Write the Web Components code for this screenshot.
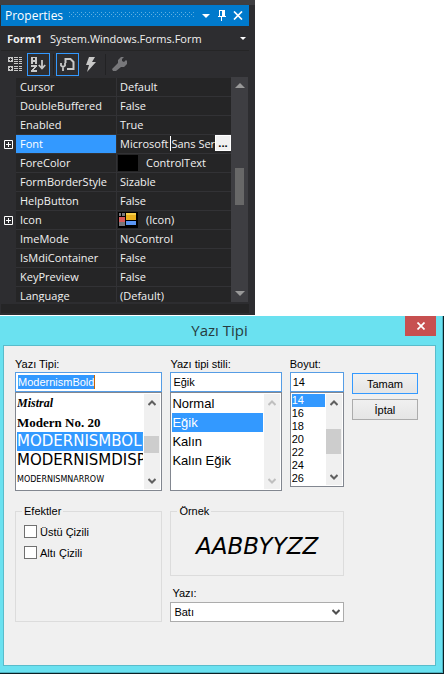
<!DOCTYPE html>
<html lang="tr">
<head>
<meta charset="utf-8">
<title>Yazı Tipi</title>
<style>
body { margin: 0; background: #fff; }
</style>
</head>
<body>
<properties-panel></properties-panel>
<font-dialog></font-dialog>
<script>
class Base extends HTMLElement {
  connectedCallback() {
    if (this.shadowRoot) return;
    this.attachShadow({ mode: 'open' }).innerHTML =
      '<style>:host,*{box-sizing:border-box}button{font:inherit;padding:0;border:0;background:none;color:inherit;display:grid;place-items:center}svg{display:block}</style>' + this.render();
  }
}

/* Vertical scroll bar: thumb position and size in percent of the track. */
customElements.define('scroll-bar', class extends Base {
  render() {
    const dark = this.hasAttribute('dark');
    const top = this.getAttribute('before') || 0;
    const size = this.getAttribute('size') || 0;
    const rest = 100 - top - size;
    const off = this.hasAttribute('disabled');
    const c = dark ? '#999' : off ? '#bfbfbf' : '#606060';
    const up = dark ? `<svg width="10" height="5"><path d="M0 5 5 0l5 5z" fill="${c}"/></svg>`
      : `<svg width="8" height="6"><path d="M.5 5 4 1.5 7.500 5" fill="none" stroke="${c}" stroke-width="2"/></svg>`;
    const down = dark ? `<svg width="10" height="5"><path d="M0 0h10L5 5z" fill="${c}"/></svg>`
      : `<svg width="8" height="6"><path d="M.5 1 4 4.500 7.500 1" fill="none" stroke="${c}" stroke-width="2"/></svg>`;
    return `<style>
      :host{display:flex;flex-direction:column;background:${dark ? '#3e3e42' : '#f0f0f0'};width:${dark ? 17 : 16}px;flex:none}
      button{height:17px;width:100%;flex:none}
      .track{flex:1;display:flex;flex-direction:column;min-height:0}
      .thumb{flex:${size} 0 0;background:${dark ? '#686868' : '#cdcdcd'};margin:0 ${dark ? '4px' : '1px 0 0'}}
      .a{flex:${top} 0 0}.b{flex:${rest} 0 0}
    </style>
    <button aria-label="Up">${up}</button>
    <div class="track"><div class="a"></div>${size ? '<div class="thumb"></div>' : ''}<div class="b"></div></div>
    <button aria-label="Down">${down}</button>`;
  }
});

customElements.define('panel-title', class extends Base {
  render() {
    return `<style>
      :host{display:flex;align-items:center;height:21px;background:#007acc;color:#fff;padding:0 3px 0 4px;font-size:12px}
      .grip{flex:1;height:7px;margin:0 4px 0 6px}
      button{width:16px;height:16px}
    </style><slot></slot>
    <svg class="grip"><defs><pattern id="d" width="4" height="4" patternUnits="userSpaceOnUse"><path d="M0 0h1v1H0zM2 2h1v1H2z" fill="#62b0e2"/></pattern></defs><rect width="100%" height="5" fill="url(#d)"/></svg>
    <button aria-label="Menu"><svg width="8" height="4"><path d="M0 0h8L4 4z" fill="#fff"/></svg></button>
    <button aria-label="Pin"><svg width="8" height="11" fill="#fff" shape-rendering="crispEdges"><path d="M1 0h6v6h1v1H4v4H3V7H0V6h1zM2 1v5h2V1z" fill-rule="evenodd"/></svg></button>
    <button aria-label="Close"><svg width="10" height="9"><path d="m1 .5 8 8m0-8-8 8" stroke="#fff" stroke-width="1.700"/></svg></button>`;
  }
});

customElements.define('panel-tools', class extends Base {
  render() {
    return `<style>
      :host{display:flex;align-items:center;height:27px;padding:0 3px;border-top:1px solid #252526}
      button{width:23px;height:23px}
      button[aria-pressed=true]{border:1px solid #3399ff}
      i{width:1px;height:21px;background:#222224;margin:0 2px 0 3px}
    </style>
    <button aria-label="Categorized"><svg width="15" height="15" fill="#c8c8c8" shape-rendering="crispEdges"><path fill-rule="evenodd" d="M0 0h5v5H0zM2 1v1H1v1h1v1h1V3h1V2H3V1zM0 9h5v5H0zm2 1v1H1v1h1v1h1v-1h1v-1H3v-1z"/><path d="M6 0h4v1H6zM6 2h4v1H6zM6 4h4v1H6zM6 6h4v1H6zM6 9h4v1H6zM6 11h4v1H6zM6 13h4v1H6zM11 0h3v1h-3zM11 2h3v1h-3zM11 4h3v1h-3zM11 6h3v1h-3zM11 9h3v1h-3zM11 11h3v1h-3zM11 13h3v1h-3z"/></svg></button>
    <button aria-label="Alphabetical" aria-pressed="true"><svg width="15" height="15" shape-rendering="crispEdges"><path d="M0 0h6v7H4V5H2v2H0zM2 1v2h2V1z" fill="#c8c8c8" fill-rule="evenodd"/><path d="M0 8h6v2H5v1H4v1H3v1h3v2H0v-2h1v-1h1v-1h1v-1H0z" fill="#c8c8c8"/><path d="M11 3v8M7.800 8l3.200 3.500L14.200 8" fill="none" stroke="#c8c8c8" stroke-width="1.800" shape-rendering="auto"/></svg></button>
    <i></i>
    <button aria-label="Properties" aria-pressed="true"><svg width="15" height="15" fill="none" stroke="#c8c8c8"><path d="M5.500 6V2h5l3 3v7H7" stroke-width="2"/><path d="M1 6v2.500L3 10l2-1.500V6M3 10v4" stroke-width="1.800"/></svg></button>
    <button aria-label="Events"><svg width="12" height="15" fill="#c8c8c8"><path d="M4 0h6L7 5h4L2 15l2-7H1z"/></svg></button>
    <i></i>
    <button aria-label="Property pages"><svg width="15" height="15"><path d="M9 0h3l-2 2v2l2 1 2-2 1 1v3l-3 3H9l-5 4H1l-1-2 6-6V3z" fill="#77777a"/></svg></button>`;
  }
});

customElements.define('property-grid', class extends Base {
  render() {
    const rows = [['Cursor','Default'],['DoubleBuffered','False'],['Enabled','True'],['Font',null],['ForeColor','ControlText'],['FormBorderStyle','Sizable'],['HelpButton','False'],['Icon','(Icon)'],['ImeMode','NoControl'],['IsMdiContainer','False'],['KeyPreview','False'],['Language','(Default)']];
    const plus = '<button aria-label="Expand"><svg width="9" height="9" fill="none" stroke="#fff"><path d="M.5.5h8v8h-8zM2 4.500h5M4.500 2v5"/></svg></button>';
    const icon = '<svg width="20" height="16"><path d="M0 0h20v16H0z" fill="#000"/><path d="M1 1h6v3H1zM1 10h6v4H1z" fill="#77777c"/><path d="M1 5h6v5H1z" fill="#d65a5a"/><path d="M3 1h1v3H3z" fill="#000"/><path d="M8 1h10v7H8z" fill="#e8b020"/><path d="M8 1h10v2H8z" fill="#f6cf4a"/><path d="M8 9h10v4H8z" fill="#5b97f5"/></svg>';
    const value = ([n, v]) => n === 'Font'
      ? '<div class="edit"><input aria-label="Font" value="Microsoft Sans Serif"><span class="caret"></span><button class="more" aria-label="Edit font">...</button></div>'
      : n === 'ForeColor' ? `<div class="v"><b></b>${v}</div>` : n === 'Icon' ? `<div class="v">${icon}${v}</div>` : v;
    return `<style>
      :host{display:flex;height:225px;overflow:hidden;color:#f1f1f1;margin-right:1px}
      .rows{flex:1;min-width:0;overflow:hidden;padding-top:1px}
      table{border-collapse:separate;border-spacing:0;width:100%;table-layout:fixed}
      th,td{height:19px;padding:0;font-weight:400;text-align:left;line-height:18px;white-space:nowrap;border-bottom:1px solid #323235}
      th.x{border:0;width:15px;padding-left:3px}
      th.n{background:#252526;padding-left:4px;width:101px;border-right:1px solid #323235}
      td{background:#252526;padding-left:3px}
      .sel th.n{background:#3399ff;color:#fff}
      .v{display:flex;align-items:center;gap:8px;height:18px;margin-left:-2px}
      b{width:20px;height:16px;background:#000}
      .edit{display:flex;position:relative;height:18px}
      input{font:inherit;color:inherit;background:none;border:0;padding:0;flex:1;min-width:0;height:18px;outline:0}
      .caret{position:absolute;left:50px;top:1px;width:1px;height:15px;background:#fff}
      .more{width:16px;height:16px;background:#f0f0f0;color:#000;border:1px solid #fff;line-height:10px;font-weight:700}
    </style>
    <div class="rows"><table>${rows.map(r => `<tr${r[0] === 'Font' ? ' class="sel"' : ''}><th class="x">${r[0] === 'Font' || r[0] === 'Icon' ? plus : ''}</th><th class="n" scope="row">${r[0]}</th><td>${value(r)}</td></tr>`).join('')}</table></div>
    <scroll-bar dark before="39" size="19"></scroll-bar>`;
  }
});

customElements.define('properties-panel', class extends Base {
  render() {
    return `<style>
      :host{display:block;max-width:255px;background:#2d2d30;border-top:5px solid #3f3f42;padding:0 6px 2px 1px;margin-bottom:1px;font-family:"Open Sans","Noto Sans",sans-serif;font-size:11px}
      .obj{display:flex;align-items:center;height:24px;width:100%;color:#f1f1f1;padding:0 3px 0 6px;gap:8px}
      .obj svg{margin-left:auto}
      .desc{height:9px;margin-top:2px;background:#252526}
    </style>
    <panel-title>Properties</panel-title>
    <button class="obj"><strong>Form1</strong><span>System.Windows.Forms.Form</span><svg width="6" height="3"><path d="M0 0h6L3 3z" fill="#fff"/></svg></button>
    <panel-tools></panel-tools>
    <property-grid></property-grid>
    <div class="desc"></div>`;
  }
});

/* Text box with a list of choices under it. */
customElements.define('list-picker', class extends Base {
  render() {
    const a = n => this.getAttribute(n);
    const items = a('items').split('|');
    return `<style>
      :host{display:block;min-width:0}
      label{display:block;line-height:16px;height:16px;white-space:nowrap}
      .box{display:flex;align-items:center;height:20px;background:#fff;border:1px solid #569de5}
      input{font:inherit;width:100%;height:16px;border:0;padding:0 2px;background:none;outline:0}
      .picked{width:auto;field-sizing:content;padding:0;margin-left:2px;background:#3399ff;color:#fff;border-right:1px solid #c86400;height:14px}
      .list{display:flex;height:${a('height') || 99}px;background:#fff;border:1px solid #828790;padding:1px}
      ul{list-style:none;margin:0;padding:0 1px 0 0;flex:1;min-width:0;overflow:hidden}
      li{height:${a('row') || 19}px;line-height:${a('row') || 19}px;overflow:hidden;white-space:nowrap;font-size:${a('size') || 13}px}
      li[aria-selected=true]{background:#3399ff;color:#fff}
      .mistral{font:italic 700 12px/19px "Liberation Serif",serif}
      .modern{font:700 13px/19px "Liberation Serif",serif}
      .wide,.narrow{font-family:"DejaVu Sans",sans-serif;text-transform:uppercase;font-size:15px}
      .narrow{font-size:8px}
    </style>
    <label for="f">${a('label')}</label>
    <div class="box"><input id="f" value="${a('value')}"${this.hasAttribute('picked') ? ' class="picked"' : ''}></div>
    <div class="list"><ul role="listbox" aria-label="${a('label')}">${items.map(t => {
      const [text, cls] = t.split('~');
      return `<li role="option"${cls ? ` lang="en" class="${cls}"` : ''} aria-selected="${text === a('value')}">${text}</li>`;
    }).join('')}</ul><scroll-bar ${this.hasAttribute('still') ? 'disabled' : `before="${a('before')}" size="${a('thumb')}"`}></scroll-bar></div>`;
  }
});

customElements.define('group-box', class extends Base {
  render() {
    return `<style>
      :host{display:block;min-width:0}
      fieldset{border:1px solid #dcdcdc;margin:0;padding:0 8px;min-width:0;height:100%}
      legend{padding:0 2px;margin-left:-2px;line-height:14px}
    </style><fieldset><legend>${this.getAttribute('label')}</legend><slot></slot></fieldset>`;
  }
});

customElements.define('check-line', class extends Base {
  render() {
    return `<style>
      :host{display:block}
      label{display:flex;align-items:center;gap:3px;height:21px;line-height:16px}
      input{appearance:none;margin:0;width:13px;height:13px;border:1px solid #707070;background:#fff}
    </style><label><input type="checkbox"><slot></slot></label>`;
  }
});

customElements.define('font-dialog', class extends Base {
  render() {
    return `<style>
      :host{display:block;background:#6ae1f0;border:solid #0a2025;border-width:0 1px 1px 0;font:11px "Liberation Sans",Arial,sans-serif;color:#000}
      .frame{border:solid #4fb3c2;border-width:0 1px 1px 0;padding:0 6px 6px 3px}
      header{display:grid;grid-template-columns:1fr auto 1fr;height:29px}
      h1{margin:0;font:400 15px/29px "Open Sans","Noto Sans",sans-serif;color:#263c40;grid-column:2}
      .close{justify-self:end;width:31px;height:20px;background:#c75050}
      main{border:1px solid #59bccb;background:#f0f0f0;padding:10px 17px 43px 11px;display:grid;grid-template-columns:147fr 111fr 54fr 66fr;column-gap:8px}
      .side{padding-top:17px;display:flex;flex-direction:column;gap:5px}
      .side button{height:21px;border:1px solid #acacac;background:linear-gradient(#f0f0f0,#e5e5e5)}
      .side .ok{border-color:#3399ff}
      .fx{grid-row:2/4}
      group-box{margin-top:13px}
      .sample,.script{grid-column:2/4}
      .checks{padding:3px 0 0}
      .sample p{margin:0;height:57px;line-height:57px;text-align:center;font-size:23px;font-style:italic;font-family:"DejaVu Sans",sans-serif;text-transform:uppercase;white-space:nowrap}
      .script label{display:block;line-height:18px;margin-top:8px;padding-left:2px}
      .pick{display:grid;align-items:center}
      select,.pick svg{grid-area:1/1}
      .pick svg{justify-self:end;margin-right:4px;pointer-events:none}
      select{appearance:none;width:100%;height:20px;border:1px solid #acacac;border-radius:0;background:#fff;font:inherit;padding:0 3px;color:#000}
    </style>
    <div class="frame">
    <header><h1>Yazı Tipi</h1><button class="close" aria-label="Kapat"><svg width="8" height="8"><path d="m.5.5 7 7m0-7-7 7" stroke="#fff" stroke-width="1.700"/></svg></button></header>
    <main>
      <list-picker label="Yazı Tipi:" value="ModernismBold" picked before="41" thumb="28" items="Mistral~mistral|Modern No. 20~modern|ModernismBold~wide|ModernismDisplay~wide|ModernismNarrow~narrow"></list-picker>
      <list-picker label="Yazı tipi stili:" value="Eğik" still items="Normal|Eğik|Kalın|Kalın Eğik"></list-picker>
      <list-picker label="Boyut:" value="14" height="95" row="13" size="11" before="31" thumb="44" items="14|16|18|20|22|24|26"></list-picker>
      <div class="side"><button class="ok">Tamam</button><button>İptal</button></div>
      <group-box class="fx" label="Efektler"><div class="checks"><check-line>Üstü Çizili</check-line><check-line>Altı Çizili</check-line></div></group-box>
      <group-box class="sample" label="Örnek"><p lang="en">AaBbYyZz</p></group-box>
      <div class="script"><label for="s">Yazı:</label><div class="pick"><select id="s"><option>Batı</option></select><svg width="8" height="6"><path d="M.5 1 4 4.500 7.500 1" fill="none" stroke="#505050" stroke-width="2"/></svg></div></div>
    </main></div>`;
  }
});
</script>
</body>
</html>
